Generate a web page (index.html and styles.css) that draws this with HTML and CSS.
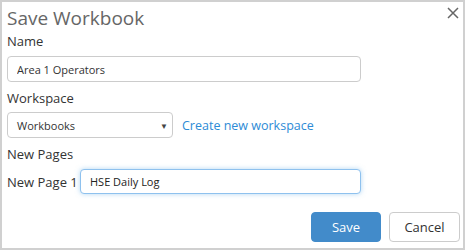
FILE: index.html
```html
<!DOCTYPE html>
<html lang="en">
<head>
    <meta charset="UTF-8">
    <title>Save Workbook</title>
    <link rel="stylesheet" href="styles.css">
</head>
<body>
    <div class="dialog">
        <button type="button" class="close-btn" aria-label="Close">
            <svg width="12" height="12" viewBox="0 0 12 12"><path d="M1 1L11 11M11 1L1 11" stroke="#666" stroke-width="1.5" fill="none"/></svg>
        </button>
        <h1>Save Workbook</h1>

        <div class="form-group">
            <label for="name">Name</label>
            <input type="text" id="name" class="wide" value="Area 1 Operators">
        </div>

        <div class="form-group">
            <label for="workspace">Workspace</label>
            <div class="row">
                <div class="select-box">
                    <span>Workbooks</span>
                    <span class="arrow">&#9660;</span>
                </div>
                <a href="#" class="link">Create new workspace</a>
            </div>
        </div>

        <div class="form-group">
            <div class="label">New Pages</div>
            <div class="row page-row">
                <span class="page-label">New Page 1</span>
                <input type="text" class="focused" value="HSE Daily Log">
            </div>
        </div>

        <div class="actions">
            <button type="button" class="btn primary">Save</button>
            <button type="button" class="btn">Cancel</button>
        </div>
    </div>
</body>
</html>
```

FILE: styles.css
```css
* {
    margin: 0;
    padding: 0;
    box-sizing: border-box;
}

body {
    font-family: 'Open Sans', 'Noto Sans', sans-serif;
    background: white;
}

.dialog {
    position: relative;
    width: 465px;
    height: 250px;
    border: 2px solid #d0d0d0;
    padding: 3px 5px 0 5px;
    color: #333;
}

.close-btn {
    position: absolute;
    top: 4px;
    right: 3px;
    background: none;
    border: none;
    width: 14px;
    height: 14px;
    display: flex;
    align-items: center;
    justify-content: center;
}

h1 {
    font-size: 19px;
    font-weight: 400;
    color: #666;
    line-height: 26px;
}

.form-group {
    margin-bottom: 6px;
}

label, .label {
    display: block;
    font-size: 13px;
    line-height: 20px;
    margin-bottom: 5px;
}

input {
    font-family: inherit;
    font-size: 11px;
    color: #333;
    height: 26px;
    border: 1px solid #ccc;
    border-radius: 4px;
    padding: 0 9px;
}

.wide {
    width: 354px;
}

.row {
    display: flex;
    align-items: center;
}

.select-box {
    width: 166px;
    height: 26px;
    border: 1px solid #ccc;
    border-radius: 4px;
    display: flex;
    align-items: center;
    justify-content: space-between;
    padding: 0 4px 0 9px;
    font-size: 11px;
    margin-top: -1px;
}

.arrow {
    font-size: 8px;
    color: #444;
}

.link {
    margin-left: 9px;
    color: #2d8bd6;
    text-decoration: none;
    font-size: 12.5px;
}

.page-row {
    margin-top: 4px;
}

.page-label {
    font-size: 13px;
    width: 73px;
}

.focused {
    width: 281px;
    height: 25px;
    border-color: #8ec1ee;
    box-shadow: 0 0 5px rgba(102, 175, 233, 0.5);
    color: #222;
}

.actions {
    display: flex;
    justify-content: flex-end;
    gap: 8px;
    margin-top: 18px;
    margin-right: -2px;
}

.btn {
    width: 71px;
    height: 30px;
    font-family: inherit;
    font-size: 13px;
    background: white;
    border: 1px solid #ccc;
    border-radius: 4px;
    color: #333;
}

.primary {
    background: #428bca;
    border-color: #428bca;
    color: white;
    width: 70px;
}
```
